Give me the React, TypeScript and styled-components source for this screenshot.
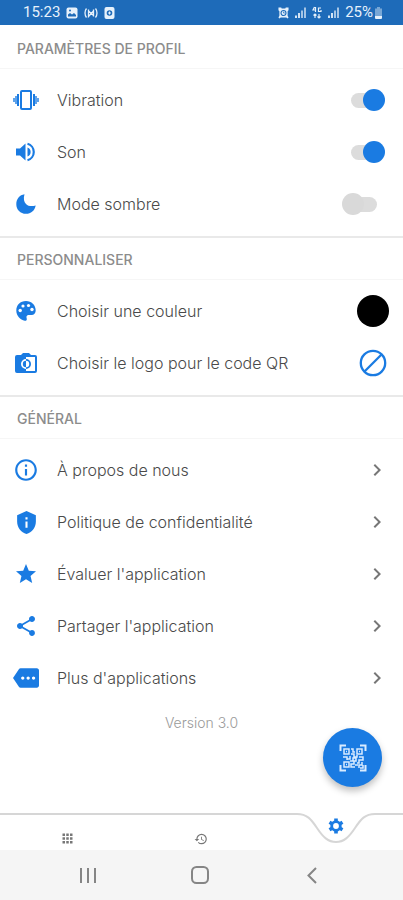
import React, { useState } from "react";
import styled, { createGlobalStyle } from "styled-components";
import {
  MdApps,
  MdChevronRight,
  MdHistory,
  MdMore,
  MdOutlineInfo,
  MdPrivacyTip,
  MdShare,
  MdStar,
} from "react-icons/md";

const blue = "#1a7be2";

const GlobalStyle = createGlobalStyle`
  *, *::before, *::after { box-sizing: border-box; }
  body { margin: 0; background: #fff; font-family: Inter, Roboto, sans-serif; }
  button, input { font: inherit; margin: 0; padding: 0; border: 0; background: none; }
`;

const Page = styled.div`
  min-height: 100vh;
  display: flex;
  flex-direction: column;
  background: #fff;
`;

const StatusBar = styled.header`
  height: 25px;
  flex: none;
  display: flex;
  align-items: center;
  justify-content: space-between;
  padding: 0 20px 0 23px;
  background: #1e6bb9;
  color: #e6f1fb;
  font-family: Roboto, sans-serif;
  font-size: 15px;
  line-height: 25px;
`;

const StatusGroup = styled.div`
  display: flex;
  align-items: center;
  gap: 6px;
`;

const Battery = styled.span`
  display: flex;
  align-items: center;
  gap: 1px;
`;

const Main = styled.main`
  padding-top: 2px;
`;

const Section = styled.section`
  border-bottom: 2px solid #e9e9e9;
  &:last-of-type { border-bottom: 0; }
`;

const SectionTitle = styled.h2`
  margin: 0;
  padding: 2px 17px 0;
  height: 42px;
  border-bottom: 1px solid #f6f6f6;
  color: #8c8c8c;
  font-size: 14px;
  font-weight: 500;
  line-height: 40px;
`;

const List = styled.ul`
  list-style: none;
  margin: 0;
  padding: 5px 0 6px;
`;

const Row = styled.li`
  display: flex;
  align-items: center;
  height: 52px;
  padding: 0 14px 0 13px;
`;

const rowText = `
  flex: 1;
  align-self: stretch;
  display: flex;
  align-items: center;
  gap: 18px;
  color: #4a4a4a;
  font-size: 16px;
  font-weight: 300;
  line-height: 24px;
  text-align: left;
  text-decoration: none;
`;

const RowLabel = styled.label`${rowText}`;
const RowLink = styled.a`${rowText}`;

const RowCaption = styled.span`
  flex: 1;
`;

const IconSlot = styled.span`
  flex: none;
  width: 26px;
  display: flex;
  justify-content: center;
  color: ${blue};
`;

const ChevronSlot = styled.span`
  display: flex;
  color: #777;
`;

const Switch = styled.input`
  appearance: none;
  flex: none;
  display: grid;
  align-items: center;
  width: 43px;
  height: 22px;
  margin-right: 4px;
  cursor: pointer;
  &::before {
    content: "";
    grid-area: 1 / 1;
    justify-self: center;
    width: 26px;
    height: 15px;
    border-radius: 8px;
    background: #dcdcdc;
  }
  &::after {
    content: "";
    grid-area: 1 / 1;
    justify-self: start;
    width: 22px;
    height: 22px;
    border-radius: 50%;
    background: #d9d9d9;
  }
  &:checked::after {
    justify-self: end;
    background: ${blue};
  }
`;

const RoundButton = styled.button<{ $fill?: string }>`
  flex: none;
  display: flex;
  align-items: center;
  justify-content: center;
  width: 32px;
  height: 32px;
  border-radius: 50%;
  background: ${(p) => p.$fill ?? "transparent"};
  color: ${blue};
  cursor: pointer;
`;

const Version = styled.p`
  margin: 0;
  padding-top: 3px;
  text-align: center;
  color: #9a9a9a;
  font-size: 14px;
  font-weight: 300;
  line-height: 20px;
`;

const Footer = styled.footer`
  position: sticky;
  bottom: 0;
  margin-top: auto;
`;

const ScanButton = styled.button`
  position: absolute;
  right: 21px;
  bottom: 113px;
  display: flex;
  align-items: center;
  justify-content: center;
  width: 59px;
  height: 59px;
  border-radius: 50%;
  background: ${blue};
  box-shadow: 0 4px 7px rgba(0, 0, 0, 0.25);
  color: #d9ecff;
  cursor: pointer;
`;

const TabBar = styled.nav`
  display: grid;
  grid-template-columns: repeat(3, 1fr);
  height: 37px;
  background: #fff;
`;

const Tab = styled.button`
  display: flex;
  align-items: flex-end;
  justify-content: center;
  padding-bottom: 4px;
  border-top: 2px solid #d6d6d6;
  color: #777;
`;

const ActiveTab = styled.button`
  display: grid;
  grid-template-columns: 1fr 84px 1fr;
  color: ${blue};
  &::before, &::after {
    content: "";
    height: 2px;
    background: #d6d6d6;
  }
`;

const Notch = styled.span`
  display: grid;
  justify-items: center;
  & > svg { grid-area: 1 / 1; }
  & > svg:last-child { margin-top: 5px; }
`;

const SystemBar = styled.div`
  display: flex;
  justify-content: center;
  gap: 88px;
  height: 50px;
  padding-right: 4px;
  background: #f5f5f5;
`;

const SystemButton = styled.button`
  display: flex;
  align-items: center;
  justify-content: center;
  width: 24px;
  color: #858585;
`;

function VibrationIcon() {
  return (
    <svg width="26" height="22" viewBox="0 0 26 22" fill="none" stroke="currentColor" strokeWidth="2">
      <rect x="8" y="2" width="10" height="18" rx="1" />
      <path d="M5 5v12M21 5v12" />
      <path d="M1 9v4M25 9v4M3 7v8M23 7v8" strokeWidth="1.400" />
    </svg>
  );
}

function SoundIcon() {
  return (
    <svg width="20" height="20" viewBox="0 0 20 20" fill="currentColor">
      <path d="M0 6.500h4L9.500 1.500v17L4 13.500H0Z" />
      <path d="M11.500 5.500a4.800 4.800 0 0 1 0 9Z" />
      <path d="M11.500 1.800a8.500 8.500 0 0 1 0 16.400" fill="none" stroke="currentColor" strokeWidth="2.200" />
    </svg>
  );
}

function MoonIcon() {
  return (
    <svg width="20" height="20" viewBox="0 0 20 20">
      <path
        fill="currentColor"
        d="M8.500.3C7.200 4.500 8 8 10 9.900c2.200 2.200 5.700 2.900 9.700 1.500C18.700 16.500 15 19.800 10 19.800 4.400 19.800.3 15.600.3 10.200.3 5 3.600 1 8.500.3Z"
      />
    </svg>
  );
}

function PaletteIcon() {
  return (
    <svg width="20" height="20" viewBox="0 0 20 20">
      <path
        fill="currentColor"
        d="M10 0C4.200 0 .3 4 .3 9.500c0 5.300 3.900 9.300 8.500 10.200 1.300.3 2.100-.5 2-1.700-.1-1.100-.6-1.900-.2-2.800.4-.9 1.400-1.200 2.600-1.200h2.300c2.500 0 4.200-1.900 4.200-4.600C19.700 4 15.500 0 10 0Z"
      />
      <g fill="#fff">
        <circle cx="4.200" cy="9.500" r="1.700" />
        <circle cx="7" cy="5" r="1.600" />
        <circle cx="12.500" cy="4.500" r="1.600" />
        <circle cx="16" cy="8.500" r="1.700" />
      </g>
    </svg>
  );
}

function CameraIcon() {
  return (
    <svg width="22" height="20" viewBox="0 0 22 20" fill="currentColor">
      <path
        fillRule="evenodd"
        d="M2 2h4l2-2h6l2 2h4a2 2 0 0 1 2 2v14a2 2 0 0 1-2 2H2a2 2 0 0 1-2-2V4a2 2 0 0 1 2-2ZM11 4v2a5 5 0 0 0 0 10v2h9V4Z"
      />
      <path d="M11 6a5 5 0 0 1 0 10v-1.800a3.200 3.200 0 0 0 0-6.400Z" />
      <path d="M11 7.800a3.200 3.200 0 0 0 0 6.400Z" />
    </svg>
  );
}

function NoneIcon() {
  return (
    <svg width="28" height="28" viewBox="0 0 28 28" fill="none" stroke="currentColor" strokeWidth="2.300">
      <circle cx="14" cy="14" r="12.200" />
      <path d="M5.500 22.500l17-17" />
    </svg>
  );
}

function GearIcon() {
  return (
    <svg width="16" height="16" viewBox="0 0 16 16" fill="none" stroke="currentColor">
      <circle cx="8" cy="8" r="4.300" strokeWidth="2.800" />
      <path
        d="M8 .5v3M8 12.500v3M1.500 4.250l2.600 1.500M11.900 10.250l2.600 1.500M1.500 11.750l2.600-1.500M11.900 5.750l2.600-1.500"
        strokeWidth="3.600"
      />
    </svg>
  );
}

function QrIcon() {
  return (
    <svg width="28" height="28" viewBox="0 0 28 28" fill="none" stroke="currentColor" strokeWidth="1.500">
      <path d="M1.500 7V1.500H7M21 1.500h5.500V7M26.500 21v5.500H21M7 26.500H1.500V21" strokeWidth="2" />
      <path d="M5 5h5v5H5zM18 5h5v5h-5zM5 18h5v5H5z" />
      <path d="M7 7.500h1M20 7.500h1M7 20.500h1M12 5h2v3h2M12 10h3v3h3v-2M4 13h4v2h3v-3M11 17h3v-3h3v3h-2v3h-3v3h4M20 13h4v3h-4v3h-2M23 18v3h-3v3M16 21h3M8 15v1M21 24h3v-3" />
    </svg>
  );
}

function PictureIcon() {
  return (
    <svg width="12" height="12" viewBox="0 0 12 12">
      <rect x=".5" y=".5" width="11" height="11" rx="2" fill="currentColor" />
      <path d="M2 9.500V7.500l2-1.500 2 1.500L8 6l2 2v1.500Z" fill="#1e6bb9" />
      <circle cx="4" cy="3.500" r="1" fill="#1e6bb9" />
    </svg>
  );
}

function CastIcon() {
  return (
    <svg width="14" height="12" viewBox="0 0 14 12" fill="none" stroke="currentColor" strokeWidth="1.300">
      <path d="M2.500 1.500c-2 2.500-2 6.500 0 9M11.500 1.500c2 2.500 2 6.500 0 9M4.500 2.500v7L9.500 4v5.500M4.500 4l5 4.500M9.500 2.500V4" />
    </svg>
  );
}

function BadgeIcon() {
  return (
    <svg width="11" height="12" viewBox="0 0 11 12">
      <rect x=".5" width="10" height="12" rx="2" fill="currentColor" />
      <circle cx="5.500" cy="6" r="2.800" fill="#1e6bb9" />
      <path d="M4 6h3M5.500 4.500v3" stroke="#e6f1fb" />
    </svg>
  );
}

function AlarmIcon() {
  return (
    <svg width="11" height="12" viewBox="0 0 12 12">
      <path d="M.5 0h3L4 1h4l.5-1h3v3l-1 1v5l1 2-1 1-1.500-1h-6L1.500 12l-1-1 1-2V4l-1-1Z" fill="currentColor" />
      <circle cx="6" cy="6" r="2.700" fill="none" stroke="#1e6bb9" strokeWidth="1.200" />
      <path d="M6 4.500V6h1.500" fill="none" stroke="#1e6bb9" strokeWidth=".8" />
    </svg>
  );
}

function SignalIcon() {
  return (
    <svg width="11" height="11" viewBox="0 0 11 11" stroke="currentColor" strokeWidth="1.800">
      <path d="M1 8.500V11M4 6v5" />
      <path d="M7 3.500V11M10 .5V11" opacity=".75" />
    </svg>
  );
}

function DataIcon() {
  return (
    <svg width="10" height="13" viewBox="0 0 10 13" fill="none" stroke="currentColor" strokeWidth="1.200">
      <path d="M2.500 1L1 4h3M3.500 1v5M9 2H6.500v3.500H9V4M3 12V8M1.500 9.500L3 8l1.500 1.500M7 8v4M5.500 10.500L7 12l1.500-1.500" />
    </svg>
  );
}

function BatteryIcon() {
  return (
    <svg width="9" height="12" viewBox="0 0 9 12" fill="currentColor">
      <path d="M3 0h3v1.500h2V9H1V1.500h2Z" opacity=".45" />
      <path d="M1 9h7v2a1 1 0 0 1-1 1H2a1 1 0 0 1-1-1Z" />
    </svg>
  );
}

type SwitchRowProps = { icon: React.ReactNode; label: string; id: string; initial: boolean };

function SwitchRow({ icon, label, id, initial }: SwitchRowProps) {
  const [on, setOn] = useState(initial);
  return (
    <Row>
      <RowLabel htmlFor={id}>
        <IconSlot>{icon}</IconSlot>
        <RowCaption>{label}</RowCaption>
      </RowLabel>
      <Switch id={id} type="checkbox" role="switch" checked={on} onChange={() => setOn(!on)} />
    </Row>
  );
}

const links = [
  { icon: <MdOutlineInfo size={26} />, label: "À propos de nous" },
  { icon: <MdPrivacyTip size={25} />, label: "Politique de confidentialité" },
  { icon: <MdStar size={24} />, label: "Évaluer l'application" },
  { icon: <MdShare size={24} />, label: "Partager l'application" },
  { icon: <MdMore size={26} />, label: "Plus d'applications" },
];

export default function App() {
  return (
    <Page>
      <GlobalStyle />
      <StatusBar>
        <StatusGroup>
          <span>15:23</span>
          <PictureIcon />
          <CastIcon />
          <BadgeIcon />
        </StatusGroup>
        <StatusGroup>
          <AlarmIcon />
          <SignalIcon />
          <DataIcon />
          <SignalIcon />
          <Battery>
            25%
            <BatteryIcon />
          </Battery>
        </StatusGroup>
      </StatusBar>

      <Main>
        <Section>
          <SectionTitle>PARAMÈTRES DE PROFIL</SectionTitle>
          <List>
            <SwitchRow id="vibration" icon={<VibrationIcon />} label="Vibration" initial />
            <SwitchRow id="sound" icon={<SoundIcon />} label="Son" initial />
            <SwitchRow id="dark" icon={<MoonIcon />} label="Mode sombre" initial={false} />
          </List>
        </Section>

        <Section>
          <SectionTitle>PERSONNALISER</SectionTitle>
          <List>
            <Row>
              <RowLabel htmlFor="color">
                <IconSlot><PaletteIcon /></IconSlot>
                <RowCaption>Choisir une couleur</RowCaption>
              </RowLabel>
              <RoundButton id="color" type="button" $fill="#000" />
            </Row>
            <Row>
              <RowLabel htmlFor="logo">
                <IconSlot><CameraIcon /></IconSlot>
                <RowCaption>Choisir le logo pour le code QR</RowCaption>
              </RowLabel>
              <RoundButton id="logo" type="button"><NoneIcon /></RoundButton>
            </Row>
          </List>
        </Section>

        <Section>
          <SectionTitle>GÉNÉRAL</SectionTitle>
          <List>
            {links.map(({ icon, label }) => (
              <Row key={label}>
                <RowLink href="#">
                  <IconSlot>{icon}</IconSlot>
                  <RowCaption>{label}</RowCaption>
                  <ChevronSlot><MdChevronRight size={24} /></ChevronSlot>
                </RowLink>
              </Row>
            ))}
          </List>
        </Section>
        <Version>Version 3.0</Version>
      </Main>

      <Footer>
        <ScanButton type="button" aria-label="Scanner"><QrIcon /></ScanButton>
        <TabBar>
          <Tab type="button" aria-label="Accueil"><MdApps size={15} /></Tab>
          <Tab type="button" aria-label="Historique"><MdHistory size={14} /></Tab>
          <ActiveTab type="button" aria-label="Paramètres">
            <Notch>
              <svg width="84" height="32" viewBox="0 0 84 32" fill="none" stroke="#d6d6d6" strokeWidth="2">
                <path d="M0 1h3C13 1 17 6 23 15c6 9 11 14 19 14s13-5 19-14C67 6 71 1 81 1h3" />
              </svg>
              <GearIcon />
            </Notch>
          </ActiveTab>
        </TabBar>
        <SystemBar>
          <SystemButton type="button" aria-label="Applications récentes">
            <svg width="18" height="17" viewBox="0 0 18 17" stroke="currentColor" strokeWidth="2">
              <path d="M2 1v15M9 1v15M16 1v15" />
            </svg>
          </SystemButton>
          <SystemButton type="button" aria-label="Écran d'accueil">
            <svg width="18" height="18" viewBox="0 0 18 18" fill="none" stroke="currentColor" strokeWidth="2">
              <rect x="1" y="1" width="16" height="16" rx="4.500" />
            </svg>
          </SystemButton>
          <SystemButton type="button" aria-label="Retour">
            <svg width="10" height="17" viewBox="0 0 10 17" fill="none" stroke="currentColor" strokeWidth="2">
              <path d="M9 1L1.500 8.500 9 16" />
            </svg>
          </SystemButton>
        </SystemBar>
      </Footer>
    </Page>
  );
}
